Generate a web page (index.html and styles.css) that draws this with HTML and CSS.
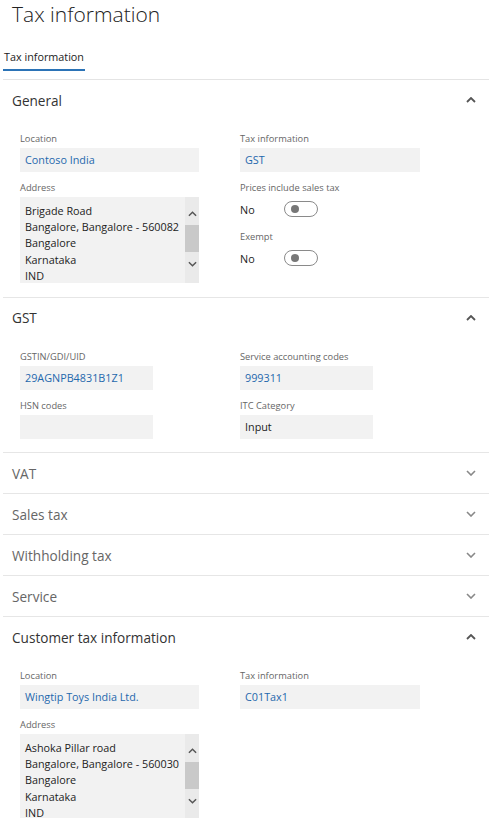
FILE: index.html
```html
<!DOCTYPE html>
<html>
<head>
<meta charset="utf-8">
<link rel="stylesheet" href="styles.css">
</head>
<body>
<div class="page">
  <h1 class="title">Tax information</h1>
  <div class="tabs"><div class="tab">Tax information</div></div>

  <section class="section first">
    <div class="sec-head"><span class="sec-title">General</span><svg class="chev" viewBox="0 0 10 6"><path d="M1 5 L5 1 L9 5"/></svg></div>
    <div class="sec-body">
      <div class="col">
        <div class="field"><div class="label">Location</div><div class="box link">Contoso India</div></div>
        <div class="field"><div class="label">Address</div>
          <div class="area"><div class="area-text">Brigade Road<br>Bangalore, Bangalore - 560082<br>Bangalore<br>Karnataka<br>IND</div>
            <div class="sbar"><svg class="sarrow" viewBox="0 0 10 6"><path d="M1 5 L5 1 L9 5"/></svg><div class="thumb"></div><svg class="sarrow" viewBox="0 0 10 6"><path d="M1 1 L5 5 L9 1"/></svg></div>
          </div>
        </div>
      </div>
      <div class="col">
        <div class="field"><div class="label">Tax information</div><div class="box wide link">GST</div></div>
        <div class="field"><div class="label">Prices include sales tax</div><div class="toggle-row"><span class="tval">No</span><span class="toggle"><span class="knob"></span></span></div></div>
        <div class="field"><div class="label">Exempt</div><div class="toggle-row"><span class="tval">No</span><span class="toggle"><span class="knob"></span></span></div></div>
      </div>
    </div>
  </section>

  <section class="section">
    <div class="sec-head"><span class="sec-title">GST</span><svg class="chev" viewBox="0 0 10 6"><path d="M1 5 L5 1 L9 5"/></svg></div>
    <div class="sec-body">
      <div class="col">
        <div class="field"><div class="label">GSTIN/GDI/UID</div><div class="box short link">29AGNPB4831B1Z1</div></div>
        <div class="field"><div class="label">HSN codes</div><div class="box short"></div></div>
      </div>
      <div class="col">
        <div class="field"><div class="label">Service accounting codes</div><div class="box short link">999311</div></div>
        <div class="field"><div class="label">ITC Category</div><div class="box short">Input</div></div>
      </div>
    </div>
  </section>

  <section class="section"><div class="sec-head"><span class="sec-title muted">VAT</span><svg class="chev light" viewBox="0 0 10 6"><path d="M1 1 L5 5 L9 1"/></svg></div></section>
  <section class="section"><div class="sec-head"><span class="sec-title muted">Sales tax</span><svg class="chev light" viewBox="0 0 10 6"><path d="M1 1 L5 5 L9 1"/></svg></div></section>
  <section class="section"><div class="sec-head"><span class="sec-title muted">Withholding tax</span><svg class="chev light" viewBox="0 0 10 6"><path d="M1 1 L5 5 L9 1"/></svg></div></section>
  <section class="section"><div class="sec-head"><span class="sec-title muted">Service</span><svg class="chev light" viewBox="0 0 10 6"><path d="M1 1 L5 5 L9 1"/></svg></div></section>

  <section class="section">
    <div class="sec-head"><span class="sec-title">Customer tax information</span><svg class="chev" viewBox="0 0 10 6"><path d="M1 5 L5 1 L9 5"/></svg></div>
    <div class="sec-body">
      <div class="col">
        <div class="field"><div class="label">Location</div><div class="box link">Wingtip Toys India Ltd.</div></div>
        <div class="field"><div class="label">Address</div>
          <div class="area"><div class="area-text">Ashoka Pillar road<br>Bangalore, Bangalore - 560030<br>Bangalore<br>Karnataka<br>IND</div>
            <div class="sbar"><svg class="sarrow" viewBox="0 0 10 6"><path d="M1 5 L5 1 L9 5"/></svg><div class="thumb"></div><svg class="sarrow" viewBox="0 0 10 6"><path d="M1 1 L5 5 L9 1"/></svg></div>
          </div>
        </div>
      </div>
      <div class="col">
        <div class="field"><div class="label">Tax information</div><div class="box wide link">C01Tax1</div></div>
      </div>
    </div>
  </section>
</div>
</body>
</html>
```

FILE: styles.css
```css
* { box-sizing: border-box; }
html, body { margin: 0; padding: 0; background: #fff; }
body { font-family: "Open Sans", "Noto Sans", sans-serif; color: #222; overflow: hidden; }
.page { padding: 0 3px; }
.title { margin: -1px 0 0; padding: 0 0 0 9px; font-size: 21px; font-weight: 300; line-height: 30px; color: #222; }
.tabs { display: flex; margin-top: 20px; border-bottom: 1px solid #e4e4e4; padding-bottom: 8px; }
.tab { font-size: 10.8px; line-height: 15px; color: #222; padding: 0 1px 5px 1px; border-bottom: 2px solid #2b73b6; }
.section { border-top: 1px solid #e6e6e6; }
.section.first { border-top: none; }
.sec-head { height: 40px; display: flex; align-items: center; justify-content: space-between; padding: 0 13px 0 9px; }
.sec-title { font-size: 13.6px; font-weight: 400; color: #333; }
.sec-title.muted { color: #666; }
.chev { width: 10px; height: 6px; fill: none; stroke: #555; stroke-width: 1.8; }
.chev.light { stroke: #888; stroke-width: 1.6; }
.sec-body { display: grid; grid-template-columns: 220px 1fr; padding: 11px 0 13.5px 17px; }
.col { display: flex; flex-direction: column; gap: 8px; }
.label { font-size: 9.3px; line-height: 16px; margin-bottom: 1px; color: #666; white-space: nowrap; }
.box { height: 24px; width: 179px; background: #f2f2f2; font-size: 10.8px; line-height: 24px; padding: 0 5px; color: #222; white-space: nowrap; }
.box.wide { width: 180px; }
.box.short { width: 133px; }
.link { color: #1f68ad; }
.area { width: 179px; height: 86px; background: #f2f2f2; overflow: hidden; display: flex; }
.area-text { flex: 1; font-size: 10.8px; line-height: 16.3px; padding: 5.7px 0 0 5px; color: #222; white-space: nowrap; overflow: hidden; }
.sbar { width: 14px; flex: none; background: #eaeaea; display: flex; flex-direction: column; align-items: center; padding-top: 14px; }
.sarrow { width: 9px; height: 6px; fill: none; stroke: #555; stroke-width: 1.6; flex: none; }
.thumb { width: 14px; height: 27px; background: #c9c9c9; margin: 8px 0 9px; flex: none; }
.toggle-row { height: 24px; display: flex; align-items: center; }
.tval { font-size: 10.8px; width: 44px; color: #222; }
.toggle { width: 34px; height: 16px; border: 1px solid #8a8a8a; border-radius: 8px; display: flex; align-items: center; padding-left: 6px; }
.knob { width: 8px; height: 8px; border-radius: 50%; background: #777; }
```
